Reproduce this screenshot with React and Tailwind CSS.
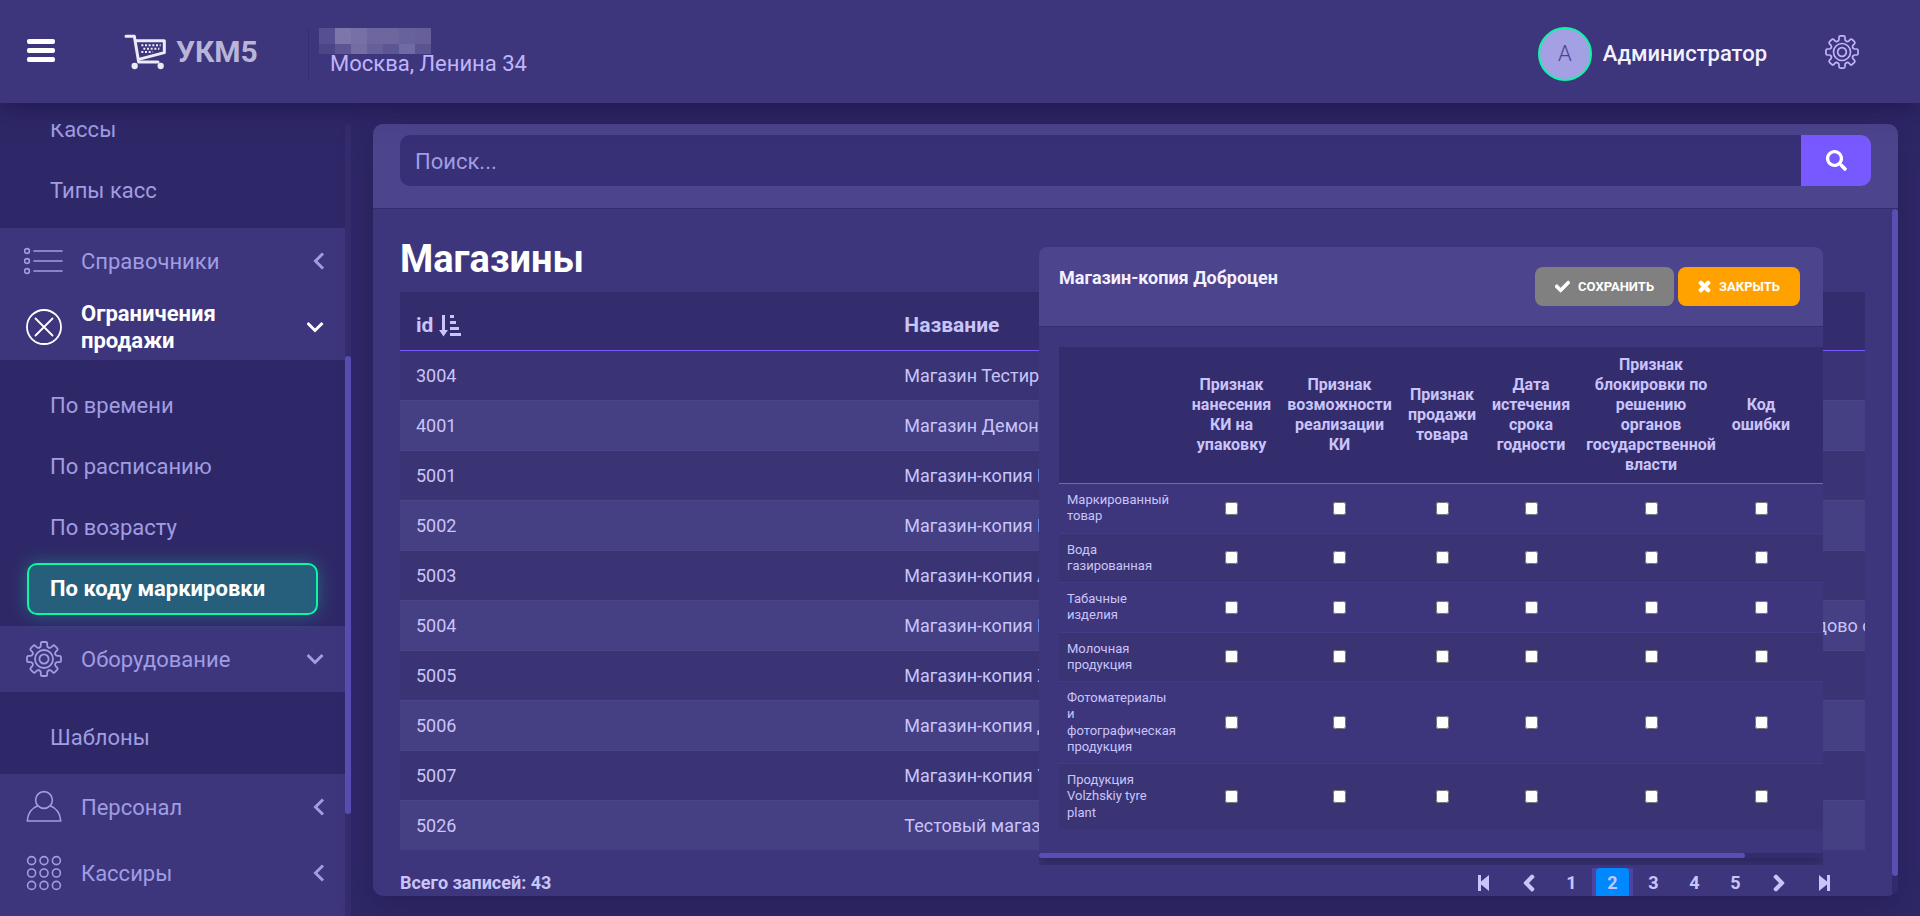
import { FaCheck, FaChevronLeft, FaChevronRight, FaSearch, FaTimes } from "react-icons/fa";

const shops = [
  { id: 3004, name: "Магазин Тестирование" },
  { id: 4001, name: "Магазин Демонстрация" },
  { id: 5001, name: "Магазин-копия Мария" },
  { id: 5002, name: "Магазин-копия Магнит" },
  { id: 5003, name: "Магазин-копия Ассорти" },
  { id: 5004, name: "Магазин-копия Весна", address: "Московская область, городской округ, г. Домодедово с. Ям" },
  { id: 5005, name: "Магазин-копия Хороший" },
  { id: 5006, name: "Магазин-копия Доброцен" },
  { id: 5007, name: "Магазин-копия Удача" },
  { id: 5026, name: "Тестовый магазин" },
];

const flags = [
  { label: "Признак нанесения КИ на упаковку", width: "w-[95px]" },
  { label: "Признак возможности реализации КИ", width: "w-[121px]" },
  { label: "Признак продажи товара", width: "w-[84px]" },
  { label: "Дата истечения срока годности", width: "w-[94px]" },
  { label: "Признак блокировки по решению органов государственной власти", width: "w-[146px]" },
  { label: "Код ошибки", width: "w-[74px]" },
];

const products = [
  "Маркированный товар",
  "Вода газированная",
  "Табачные изделия",
  "Молочная продукция",
  "Фотоматериалы и фотографическая продукция",
  "Продукция Volzhskiy tyre plant",
];

// Blurred-out company name, one colour per cell
const mosaic = [
  ["#55508f", "#7d76aa", "#7670a6", "#6e679f", "#6d669f", "#68629c", "#665f9a"],
  ["#4c4687", "#5b5592", "#736da4", "#66609a", "#5c5693", "#716ba3", "#5a5491"],
];

function GearIcon({ className }) {
  return (
    <svg className={className} viewBox="-18 -18 36 36" fill="none" stroke="currentColor" strokeWidth="1.8" strokeLinecap="round" strokeLinejoin="round">
      {[0, 45, 90, 135, 180, 225, 270, 315].map((angle) => (
        <path
          key={angle}
          transform={`rotate(${angle})`}
          d="M-4.71 -11.36Q-3.2 -11.9 -3.2 -13.2V-15.4Q-3.2 -17 -1.6 -17H1.6Q3.2 -17 3.2 -15.4V-13.2Q3.2 -11.9 4.71 -11.36"
        />
      ))}
      <circle r="9" />
      <circle r="4.6" />
    </svg>
  );
}

function ListIcon() {
  return (
    <svg className="w-10 h-7" viewBox="0 0 40 28" fill="none" stroke="currentColor" strokeWidth="1.6" strokeLinecap="round">
      {[4, 14, 24].map((y) => (
        <g key={y}>
          <circle cx="3" cy={y} r="2.4" />
          <path d={`M10 ${y}H38`} />
        </g>
      ))}
    </svg>
  );
}

function CrossIcon() {
  return (
    <svg className="w-9 h-9" viewBox="0 0 36 36" fill="none" stroke="currentColor" strokeWidth="1.8" strokeLinecap="round">
      <circle cx="18" cy="18" r="17" />
      <path d="M9.5 9.5L26.5 26.5M26.5 9.5L9.5 26.5" />
    </svg>
  );
}

function PersonIcon() {
  return (
    <svg className="w-9 h-9" viewBox="0 0 36 36" fill="none" stroke="currentColor" strokeWidth="1.6" strokeLinejoin="round">
      <circle cx="18" cy="11" r="8.4" />
      <path d="M11.8 16.8Q2.2 20.5 1.2 32H34.8Q33.8 20.5 24.2 16.8" />
    </svg>
  );
}

function DotsIcon() {
  return (
    <svg className="w-9 h-9" viewBox="0 0 36 36" fill="none" stroke="currentColor" strokeWidth="1.6">
      {[5.6, 18, 30.4].map((y) => [5.6, 18, 30.4].map((x) => <circle key={`${x}-${y}`} cx={x} cy={y} r="4" />))}
    </svg>
  );
}

function CartLogo() {
  return (
    <svg className="w-[42px] h-9" viewBox="0 0 126 108" fill="none" stroke="#eceaf6" strokeWidth="9" strokeLinecap="round" strokeLinejoin="round">
      <path d="M6 7H31L44 84H102" />
      <path d="M36 20H121V56L44 76" />
      <circle cx="32" cy="96" r="5" fill="#eceaf6" />
      <circle cx="110" cy="96" r="5" fill="#eceaf6" />
      <path d="M52 34H110" strokeWidth="6" strokeLinecap="butt" strokeDasharray="6 5" />
      <path d="M58 44H106" strokeWidth="6" strokeLinecap="butt" strokeDasharray="6 5" />
      <path d="M52 54H86" strokeWidth="6" strokeLinecap="butt" strokeDasharray="6 5" />
    </svg>
  );
}

function SortIcon() {
  return (
    <svg className="w-[22px] h-[22px]" viewBox="0 0 22 22" fill="currentColor">
      <path d="M3 0H6V15H9L4.500 21.500L0 15H3ZM11 0H15V3H11ZM11 6H17V9H11ZM11 12H20V15H11ZM11 18H22V21H11Z" />
    </svg>
  );
}

function SkipIcon({ className }) {
  return (
    <svg className={className} viewBox="0 0 12 16" fill="currentColor">
      <path d="M0 0H3V6.500L11 0V16L3 9.500V16H0Z" />
    </svg>
  );
}

function MenuGroup({ icon, title, open, active }) {
  return (
    <button type="button" className={`flex items-center w-full h-[66px] shrink-0 pl-6 pr-5 text-left text-[22px] leading-[27px] ${active ? "text-white font-bold" : "text-[#a09de2]"}`}>
      <span className="flex justify-center w-10 shrink-0">{icon}</span>
      <span className="flex-1 pl-[17px]">{title}</span>
      <svg className="w-[18px] h-[18px] shrink-0" viewBox="0 0 18 18" fill="none" stroke="currentColor" strokeWidth="3">
        <path d={open ? "M0.500 5L8 12.500L15.500 5" : "M16 1.500L8.500 9L16 16.500"} />
      </svg>
    </button>
  );
}

function MenuLink({ title, active }) {
  return (
    <a
      href="#"
      className={`flex items-center h-[52px] shrink-0 mx-[27px] px-[21px] pb-[2px] rounded-[10px] border-2 text-[22px] ${
        active
          ? "border-[#0cf7a5] bg-[#265f7b] text-white font-bold shadow-[0_0_18px_rgba(12,247,165,0.3)]"
          : "border-transparent text-[#a09de2]"
      }`}
    >
      {title}
    </a>
  );
}

function Header() {
  return (
    <header className="relative z-10 flex items-center h-[103px] shrink-0 px-[27px] bg-[#3d367d] shadow-[0_4px_24px_rgba(20,14,60,0.6)]">
      <button type="button" aria-label="Меню" className="flex flex-col gap-1 w-7 mb-[2px] mr-[69px]">
        <span className="h-[5px] rounded-xs bg-white" />
        <span className="h-[5px] rounded-xs bg-white" />
        <span className="h-[5px] rounded-xs bg-white" />
      </button>
      <a href="#" className="flex items-center gap-[10px] w-[184px]">
        <CartLogo />
        <span className="font-bold text-3xl leading-9 text-[#b9b4d8]">УКМ5</span>
      </a>
      <div className="h-[52px] mt-1 pl-[10px] border-l border-[#352e6e]">
        <div className="grid grid-cols-7 w-28">
          {mosaic.map((row, i) =>
            row.map((color, j) => (
              <span key={`${i}-${j}`} className={i === 0 ? "h-4" : "h-[10px]"} style={{ backgroundColor: color }} />
            ))
          )}
        </div>
        <div className="pl-[11px] text-[22px] leading-5 text-[#c0b4fb]">Москва, Ленина 34</div>
      </div>
      <div className="flex items-center ml-auto">
        <span className="flex items-center mt-1">
          <span className="flex items-center justify-center w-[54px] h-[54px] rounded-full border-2 border-[#0cf7a5] bg-[#a3a0e3] text-[22px] font-light text-[#4c448c]">А</span>
          <span className="pl-[11px] text-[22px] font-medium text-[#f3f1ff]">Администратор</span>
        </span>
        <button type="button" aria-label="Настройки" className="ml-[58px] mr-[34px] text-[#c0b4fb]">
          <GearIcon className="w-[34px] h-[34px]" />
        </button>
      </div>
    </header>
  );
}

function Sidebar() {
  return (
    <aside className="flex w-[351px] shrink-0">
      <nav className="flex flex-col flex-1 overflow-hidden bg-[#3d367d]">
        <div className="flex flex-col shrink-0 gap-[9px] -mt-5 pb-[11px] bg-[#2f2868]">
          <MenuLink title="Кассы" />
          <MenuLink title="Типы касс" />
        </div>
        <MenuGroup icon={<ListIcon />} title="Справочники" />
        <MenuGroup icon={<CrossIcon />} title="Ограничения продажи" open active />
        <div className="flex flex-col shrink-0 gap-[9px] pt-5 pb-[11px] bg-[#2f2868]">
          <MenuLink title="По времени" />
          <MenuLink title="По расписанию" />
          <MenuLink title="По возрасту" />
          <MenuLink title="По коду маркировки" active />
        </div>
        <MenuGroup icon={<GearIcon className="w-9 h-9" />} title="Оборудование" open />
        <div className="flex flex-col shrink-0 pt-5 pb-[10px] bg-[#2f2868]">
          <MenuLink title="Шаблоны" />
        </div>
        <MenuGroup icon={<PersonIcon />} title="Персонал" />
        <MenuGroup icon={<DotsIcon />} title="Кассиры" />
      </nav>
      <div className="w-[6px] pt-[232px] bg-[#352d6e]">
        <div className="h-[458px] rounded-full bg-[#5a4eb3]" />
      </div>
    </aside>
  );
}

function ShopsTable() {
  return (
    <div className="overflow-hidden">
      <table className="w-full table-fixed text-left text-[#c9c4fa]">
        <thead className="bg-[#332d6e]">
          <tr className="h-[58px] border-b border-[#7759ff] text-[21px]">
            <th className="px-4 pt-[10px]">
              <span className="flex items-center gap-[6px]">id <SortIcon /></span>
            </th>
            <th className="px-4 pt-[10px]">Название</th>
            <th className="pl-6 pt-[10px]">Адрес</th>
          </tr>
        </thead>
        <tbody className="text-lg">
          {shops.map((shop) => (
            <tr key={shop.id} className="h-[50px] border-t border-[#4a4489] first:border-[#7759ff] odd:bg-[#3a3474] even:bg-[#453f83]">
              <td className="px-4 pt-[2px]">{shop.id}</td>
              <td className="px-4 pt-[2px] whitespace-nowrap">{shop.name}</td>
              <td className="pl-6 pt-[2px] whitespace-nowrap">{shop.address}</td>
            </tr>
          ))}
        </tbody>
      </table>
    </div>
  );
}

function Pagination() {
  return (
    <div className="flex items-start justify-between pt-[18px] pr-[19px] text-lg leading-[30px] font-bold text-[#c9c4fa]">
      <span>Всего записей: 43</span>
      <nav className="flex items-center">
        <button type="button" aria-label="Первая" className="flex items-center justify-center w-[45px] h-[30px]">
          <SkipIcon className="w-3 h-4" />
        </button>
        <button type="button" aria-label="Назад" className="flex items-center justify-center w-[45px] h-[30px]">
          <FaChevronLeft className="w-4 h-[18px]" stroke="currentColor" strokeWidth="40" />
        </button>
        {[1, 2, 3, 4, 5].map((page) => (
          <button
            key={page}
            type="button"
            className={page === 2 ? "w-[41px] h-[30px] border-x-4 border-[#4d43a0] bg-[#4d43a0]" : "w-[41px] h-[30px]"}
          >
            <span className={page === 2 ? "block rounded-t-sm bg-[#0088ff]" : ""}>{page}</span>
          </button>
        ))}
        <button type="button" aria-label="Вперёд" className="flex items-center justify-center w-[45px] h-[30px]">
          <FaChevronRight className="w-4 h-[18px]" stroke="currentColor" strokeWidth="40" />
        </button>
        <button type="button" aria-label="Последняя" className="flex items-center justify-center w-[45px] h-[30px]">
          <SkipIcon className="w-3 h-4 rotate-180" />
        </button>
      </nav>
    </div>
  );
}

function RestrictionsPanel() {
  return (
    <section className="absolute top-[38px] right-[69px] w-[784px] pb-[7px] overflow-hidden rounded-t-lg bg-[#3a3375]">
      <div className="bg-[#3d367d] shadow-[0_4px_12px_rgba(40,34,85,0.9)]">
        <div className="flex items-start justify-between h-20 pl-5 pr-[23px] pt-5 bg-[#4c448c] border-b border-[#352e6e]">
          <h2 className="text-lg leading-[22px] font-bold text-[#f3f1ff]">Магазин-копия Доброцен</h2>
          <div className="flex gap-1 text-[13px] font-bold text-white">
            <button type="button" className="flex items-center gap-2 h-[39px] px-5 rounded-lg bg-[#808080] uppercase">
              <FaCheck className="w-[15px] h-[15px]" stroke="currentColor" strokeWidth="30" /> Сохранить
            </button>
            <button type="button" className="flex items-center gap-2 h-[39px] px-5 rounded-lg bg-[#ffa200] uppercase">
              <FaTimes className="w-[13px] h-[15px]" stroke="currentColor" strokeWidth="50" /> Закрыть
            </button>
          </div>
        </div>
        <div className="pl-5 pt-5 pb-6 overflow-hidden">
          <table className="w-[854px] table-fixed text-[#c9c4fa]">
            <thead className="bg-[#332d6e]">
              <tr className="border-b border-[#7759ff] text-base leading-5">
                <td className="w-[125px]" />
                {flags.map((flag) => (
                  <th key={flag.label} className={`${flag.width} px-[6px] py-2`}>{flag.label}</th>
                ))}
                <td />
              </tr>
            </thead>
            <tbody className="text-[13px] leading-tight">
              {products.map((product) => (
                <tr key={product} className="border-b border-[#423b85] last:border-0 even:bg-[#3a3474]">
                  <td className="p-2">{product}</td>
                  {flags.map((flag) => (
                    <td key={flag.label} className="text-center align-middle">
                      <input type="checkbox" aria-label={`${product}: ${flag.label}`} className="block mx-auto" />
                    </td>
                  ))}
                  <td />
                </tr>
              ))}
            </tbody>
          </table>
        </div>
        <div className="h-[5px] bg-[#332d6e]">
          <div className="w-[90%] h-full rounded-full bg-[#5a4eb3]" />
        </div>
      </div>
    </section>
  );
}

export default function App() {
  return (
    <div className="flex flex-col h-screen overflow-hidden bg-[#2f2868] font-[Roboto,sans-serif]">
      <Header />
      <div className="flex flex-1 min-h-0 pt-[21px]">
        <Sidebar />
        <main className="flex flex-col flex-1 min-w-0 ml-[22px] mr-[22px] mb-5 rounded-[10px] bg-[#3d367d] shadow-[0_10px_30px_rgba(30,24,75,0.5)] overflow-hidden">
          <form className="flex h-[85px] shrink-0 px-[27px] pt-[11px] bg-[#4c448c] border-b border-[#352e6e]">
            <input
              type="text"
              aria-label="Поиск"
              placeholder="Поиск..."
              className="flex-1 h-[51px] pl-[15px] pt-[2px] rounded-l-[10px] bg-[#373076] text-[22px] placeholder:text-[#a09de2]"
            />
            <button type="button" aria-label="Найти" className="flex items-center justify-center w-[70px] h-[51px] rounded-r-[10px] bg-[#7759ff] text-white">
              <FaSearch className="w-[21px] h-[21px]" />
            </button>
          </form>
          <div className="flex flex-1 min-h-0">
            <div className="relative flex-1 min-w-0 pl-[27px] pr-[27px] pt-7 overflow-hidden">
              <h1 className="pb-[11px] text-[38px] leading-[44px] font-bold text-white">Магазины</h1>
              <ShopsTable />
              <Pagination />
              <RestrictionsPanel />
            </div>
            <div className="w-[6px] pb-5 bg-[#322b6b]">
              <div className="h-full rounded-full bg-[#5a4eb3]" />
            </div>
          </div>
        </main>
      </div>
    </div>
  );
}
